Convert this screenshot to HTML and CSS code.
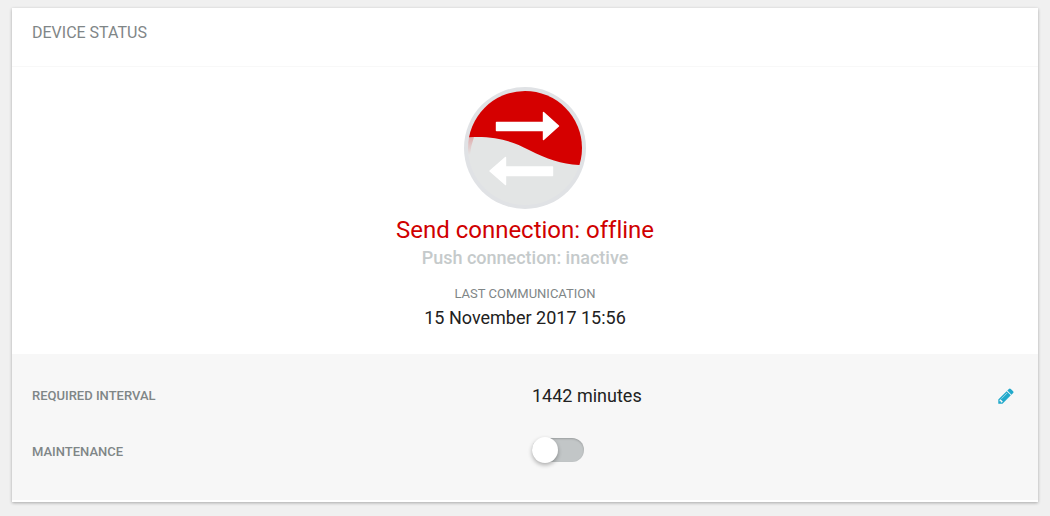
FILE: index.html
```html
<!DOCTYPE html>
<html lang="en">
<head>
<meta charset="utf-8">
<meta name="viewport" content="width=device-width, initial-scale=1">
<title>Device status</title>
<link rel="stylesheet" href="styles.css">
</head>
<body>
<main class="card">
  <header class="card-header"><h1 class="card-title">DEVICE STATUS</h1></header>
  <section class="status">
    <svg class="status-icon" viewBox="0 0 122 122" aria-hidden="true">
      <defs>
        <clipPath id="disc"><circle cx="61" cy="61" r="57"/></clipPath>
        <linearGradient id="edge" x1="0" y1="0" x2="0" y2="1">
          <stop offset="0" stop-color="#d50000" stop-opacity=".25"/>
          <stop offset="1" stop-color="#d50000" stop-opacity="0"/>
        </linearGradient>
      </defs>
      <circle cx="61" cy="61" r="61" fill="#e0e2e5"/>
      <circle cx="61" cy="61" r="57" fill="#e3e5e5"/>
      <g clip-path="url(#disc)">
        <path d="M0 50H10Q7 58 6 68H0Z" fill="url(#edge)"/>
        <path d="M0 0H122V78H115C97 77 83 72 65 63C48 54 32 49 5 50.3H0Z" fill="#d50000"/>
      </g>
      <g fill="#fff" stroke="#fff" stroke-width="1.4" stroke-linejoin="round">
        <path d="M32.5 35.5H79.5V25.5L94.5 39L79.5 52.5V43.5H32.5Z"/>
        <path d="M88.5 80H41.5V70.5L26 84L41.5 97.5V88.5H88.5Z"/>
      </g>
    </svg>
    <p class="send">Send connection: offline</p>
    <p class="push">Push connection: inactive</p>
    <p class="label last-label">LAST COMMUNICATION</p>
    <p class="value">15 November 2017 15:56</p>
  </section>
  <section class="settings">
    <div class="row">
      <span class="label">REQUIRED INTERVAL</span>
      <div class="field">
        <span class="value">1442 minutes</span>
        <button class="edit" type="button" aria-label="Edit required interval">
          <svg class="edit-icon" viewBox="0 0 1792 1792" aria-hidden="true"><path fill="currentColor" d="M491 1536l91-91-235-235-91 91v107h128v128h107zm523-928q0-22-22-22-10 0-17 7l-542 542q-7 7-7 17 0 22 22 22 10 0 17-7l542-542q7-7 7-17zm-54-192l416 416-832 832h-416v-416zm683 96q0 53-37 90l-166 166-416-416 166-165q36-38 90-38 53 0 91 38l235 234q37 39 37 91z"/></svg>
        </button>
      </div>
    </div>
    <div class="row">
      <label class="label" for="maintenance">MAINTENANCE</label>
      <div class="field switch-field"><input class="toggle" id="maintenance" type="checkbox" role="switch"></div>
    </div>
  </section>
</main>
</body>
</html>
```
FILE: styles.css
```css
* { box-sizing: border-box; }
body {
  margin: 0;
  padding: 8px 12px 14px;
  background: #f0f0f0;
  color: #212121;
  font-family: Roboto, "Liberation Sans", sans-serif;
  font-variant-ligatures: none;
}
h1, p { margin: 0; }
.card {
  background: #fff;
  padding-bottom: 2px;
  box-shadow: 0 1px 3px rgba(0, 0, 0, .3);
}
.card-header {
  padding: 15px 20px 23px;
  border-bottom: 1px solid #f8f8f8;
}
.card-title {
  font-size: 16px;
  line-height: 20px;
  font-weight: 400;
  color: #7f8687;
}
.status {
  display: flex;
  flex-direction: column;
  align-items: center;
  padding: 20px 20px 22px;
  text-align: center;
}
.status-icon { width: 122px; height: 122px; }
.send {
  margin-top: 5px;
  font-size: 24px;
  line-height: 32px;
  color: #d00000;
}
.push {
  font-size: 18px;
  line-height: 24px;
  font-weight: 500;
  color: #c5cacb;
}
.label {
  font-size: 13px;
  line-height: 20px;
  color: #7f8687;
}
.last-label { margin-top: 14px; }
.value {
  font-size: 18px;
  line-height: 28px;
}
.settings {
  padding: 14px 20px 20px;
  background: #f7f7f7;
}
.row {
  display: grid;
  grid-template-columns: 1fr 1fr;
  column-gap: 14px;
  align-items: center;
  min-height: 56px;
}
.row .label {
  justify-self: start;
  font-weight: 500;
}
.field {
  display: flex;
  align-items: center;
  justify-content: space-between;
}
.switch-field { padding-bottom: 4px; }
.edit {
  display: flex;
  padding: 3px;
  border: 0;
  background: none;
  color: #21a9cb;
  cursor: pointer;
}
.edit-icon { width: 18px; height: 18px; }
.toggle {
  appearance: none;
  display: flex;
  align-items: center;
  width: 52px;
  height: 24px;
  margin: 0;
  border-radius: 12px;
  background: #c2c6c7;
  box-shadow: inset 0 1px 2px rgba(0, 0, 0, .2);
  cursor: pointer;
}
.toggle::before {
  content: "";
  width: 26px;
  height: 26px;
  flex: none;
  border-radius: 50%;
  background: #fff;
  box-shadow: 0 2px 4px rgba(0, 0, 0, .3);
}
.toggle:checked { justify-content: flex-end; background: #21a9cb; }
```
